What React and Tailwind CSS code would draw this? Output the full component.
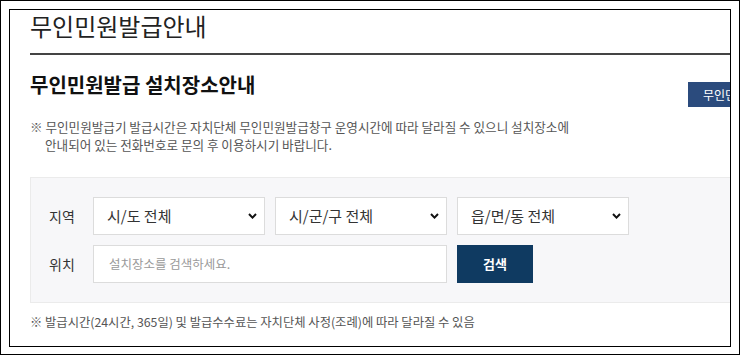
import React from 'react';

const font = { fontFamily: '"Noto Sans CJK KR", "Noto Sans", sans-serif' };

const Chevron = () => (
  <svg width="9" height="6" viewBox="0 0 9 6" className="shrink-0">
    <path d="M1 1 L4.5 4.6 L8 1" fill="none" stroke="#111" strokeWidth="2" />
  </svg>
);

const SelectBox = ({ label }) => (
  <div className="w-[172px] h-[38px] bg-white border border-[#dcdcdc] flex items-center justify-between pl-[13px] pr-[7px] text-[15px] text-[#333]">
    <span>{label}</span>
    <Chevron />
  </div>
);

const App = () => {
  return (
    <div className="w-[740px] h-[356px] bg-white" style={font}>
      <div className="w-[740px] h-[355px] border border-black p-[8px]">
        <div className="w-[722px] h-[338px] border border-black overflow-hidden">
          <div className="w-[820px] pl-[20px]">
            <h1 className="h-[32px] leading-[32px] text-[24px] font-normal text-[#222]">무인민원발급안내</h1>
            <div className="mt-[11px] h-[2px] bg-[#444]"></div>

            <div className="flex items-start mt-[17px]">
              <h2 className="w-[658px] h-[26px] leading-[26px] text-[20px] font-bold text-[#111]">
                무인민원발급 설치장소안내
              </h2>
              <div className="mt-[10px] h-[25px] px-[15px] flex items-center bg-[#2b4b7d] text-white text-[12px] whitespace-nowrap">
                무인민원발급 안내
              </div>
            </div>

            <p className="mt-[11px] text-[12.6px] leading-[18px] text-[#555] pl-[15px] -indent-[15px]">
              ※ 무인민원발급기 발급시간은 자치단체 무인민원발급창구 운영시간에 따라 달라질 수 있으니 설치장소에
              <br />
              안내되어 있는 전화번호로 문의 후 이용하시기 바랍니다.
            </p>

            <div className="mt-[23px] h-[126px] bg-[#f7f7f9] border border-[#ebebeb] pt-[19px] pl-[18px]">
              <div className="flex items-center">
                <span className="w-[44px] text-[14px] text-[#333]">지역</span>
                <div className="flex gap-[10px]">
                  <SelectBox label="시/도 전체" />
                  <SelectBox label="시/군/구 전체" />
                  <SelectBox label="읍/면/동 전체" />
                </div>
              </div>
              <div className="flex items-center mt-[10px]">
                <span className="w-[44px] text-[14px] text-[#333]">위치</span>
                <div className="w-[354px] h-[38px] bg-white border border-[#dcdcdc] flex items-center pl-[15px] text-[12.5px] text-[#999]">
                  설치장소를 검색하세요.
                </div>
                <button className="ml-[10px] w-[76px] h-[38px] bg-[#0f3a61] text-white text-[13px] font-bold">
                  검색
                </button>
              </div>
            </div>

            <p className="mt-[10px] text-[12.3px] leading-[18px] text-[#555]">
              ※ 발급시간(24시간, 365일) 및 발급수수료는 자치단체 사정(조례)에 따라 달라질 수 있음
            </p>
          </div>
        </div>
      </div>
    </div>
  );
};

export default App;
